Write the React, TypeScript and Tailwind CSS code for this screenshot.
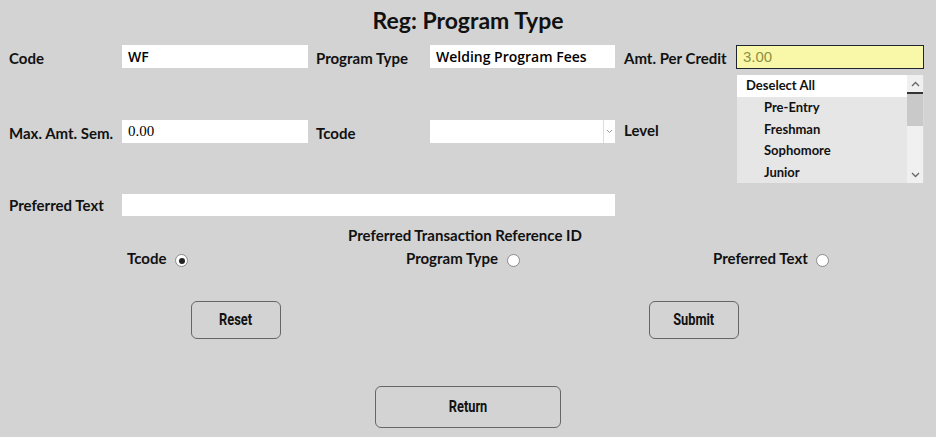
import React from 'react';

const label = "text-[15px] font-bold text-[#111]";
const field = "h-[23px] bg-white px-[6px] text-[14px] text-black flex items-center";

const Radio = ({ checked }: { checked?: boolean }) => (
    <span className="w-[13px] h-[13px] rounded-full bg-white border border-[#8a8a8a] flex items-center justify-center mt-[5px]">
        {checked && <span className="w-[6px] h-[6px] rounded-full bg-[#222]" />}
    </span>
);

const Btn = ({ text, w, h }: { text: string; w: string; h: string }) => (
    <button className={`${w} ${h} rounded-[6px] border-[1.5px] border-[#666] bg-transparent text-[16px] font-bold text-[#111]`} style={{ fontFamily: 'Roboto, sans-serif' }}>
        <span className="inline-block scale-x-[0.8]">{text}</span>
    </button>
);

export default function App() {
    const levels = ['Pre-Entry', 'Freshman', 'Sophomore', 'Junior'];
    return (
        <div className="w-[936px] h-[437px] bg-[#d3d3d3] overflow-hidden" style={{ fontFamily: 'Lato, sans-serif' }}>
            <h1 className="text-center text-[23px] font-bold text-[#111] pt-[6px] h-[45px] leading-[28px]">Reg: Program Type</h1>

            <div className="flex">
                {/* left part */}
                <div className="flex flex-col">
                    <div className="flex items-center h-[23px]">
                        <span className={`${label} w-[122px] pl-[9px] pt-[3px]`}>Code</span>
                        <div className={`${field} w-[186px]`} style={{ fontFamily: '"Open Sans", sans-serif' }}><span className="font-semibold">WF</span></div>
                        <span className={`${label} w-[114px] ml-[8px] pt-[3px]`}>Program Type</span>
                        <div className={`${field} w-[185px]`} style={{ fontFamily: '"Open Sans", sans-serif' }}><span className="font-semibold">Welding Program Fees</span></div>
                    </div>
                    <div className="flex items-center h-[23px] mt-[52px]">
                        <span className={`${label} w-[122px] pl-[9px] pt-[3px]`}>Max. Amt. Sem.</span>
                        <div className={`${field} w-[186px] text-[15px]`} style={{ fontFamily: '"Liberation Serif", serif' }}>0.00</div>
                        <span className={`${label} w-[114px] ml-[8px] pt-[3px]`}>Tcode</span>
                        <div className="w-[185px] h-[23px] bg-white flex justify-end">
                            <div className="w-[12px] border-l border-[#ddd] flex items-center justify-center">
                                <svg width="7" height="5" viewBox="0 0 7 5"><path d="M1 1l2.5 2.5L6 1" fill="none" stroke="#999" strokeWidth="1" /></svg>
                            </div>
                        </div>
                    </div>
                    <div className="flex items-center h-[22px] mt-[51px]">
                        <span className={`${label} w-[122px] pl-[9px]`}>Preferred Text</span>
                        <div className="w-[493px] h-[22px] bg-white" />
                    </div>
                </div>

                {/* right part */}
                <div className="flex flex-col ml-[9px]">
                    <div className="flex items-center h-[24px]">
                        <span className={`${label} w-[112px] pt-[3px] whitespace-nowrap`}>Amt. Per Credit</span>
                        <div className="w-[188px] h-[24px] bg-[#f8f8a8] border-[1.5px] border-[#1e2530] px-[6px] flex items-center text-[15px] text-[#8f8f45]" style={{ fontFamily: '"Liberation Sans", sans-serif' }}>3.00</div>
                    </div>
                    <div className="flex items-center mt-[6px]">
                        <span className={`${label} w-[113px] pt-[3px]`}>Level</span>
                        <div className="w-[187px] h-[108px] bg-[#e6e6e6] flex">
                            <div className="flex-1 flex flex-col">
                                <div className="h-[22px] bg-white pl-[9px] flex items-center text-[13px] font-bold text-[#111]">Deselect All</div>
                                {levels.map(l => (
                                    <div key={l} className="h-[21.5px] pl-[27px] flex items-center text-[13px] font-bold text-[#111]">{l}</div>
                                ))}
                            </div>
                            <div className="w-[17px] flex flex-col bg-[#f0f0f0] border-r border-[#d8d8d8]">
                                <div className="h-[17px] bg-[#f0f0f0] flex items-center justify-center">
                                    <svg width="9" height="6" viewBox="0 0 9 6"><path d="M1 5l3.5-3.5L8 5" fill="none" stroke="#666" strokeWidth="1.3" /></svg>
                                </div>
                                <div className="h-[2px] bg-[#333]" />
                                <div className="h-[32px] bg-[#c9c9c9]" />
                                <div className="flex-1" />
                                <div className="h-[17px] flex items-center justify-center">
                                    <svg width="9" height="6" viewBox="0 0 9 6"><path d="M1 1l3.5 3.5L8 1" fill="none" stroke="#666" strokeWidth="1.3" /></svg>
                                </div>
                            </div>
                        </div>
                    </div>
                </div>
            </div>

            <div className="text-center text-[15px] font-bold text-[#111] mt-[8px] w-[930px] h-[20px]">Preferred Transaction Reference ID</div>

            <div className="flex mt-[3px] h-[22px] items-center">
                <div className="flex items-center gap-[9px] ml-[127px] w-[279px]">
                    <span className={label}>Tcode</span>
                    <Radio checked />
                </div>
                <div className="flex items-center gap-[9px] w-[307px]">
                    <span className={label}>Program Type</span>
                    <Radio />
                </div>
                <div className="flex items-center gap-[8px]">
                    <span className={label}>Preferred Text</span>
                    <Radio />
                </div>
            </div>

            <div className="flex mt-[32px]">
                <div className="ml-[191px]"><Btn text="Reset" w="w-[90px]" h="h-[38px]" /></div>
                <div className="ml-[368px]"><Btn text="Submit" w="w-[90px]" h="h-[38px]" /></div>
            </div>

            <div className="flex mt-[47px]">
                <div className="ml-[375px]"><Btn text="Return" w="w-[186px]" h="h-[42px]" /></div>
            </div>
        </div>
    );
}
